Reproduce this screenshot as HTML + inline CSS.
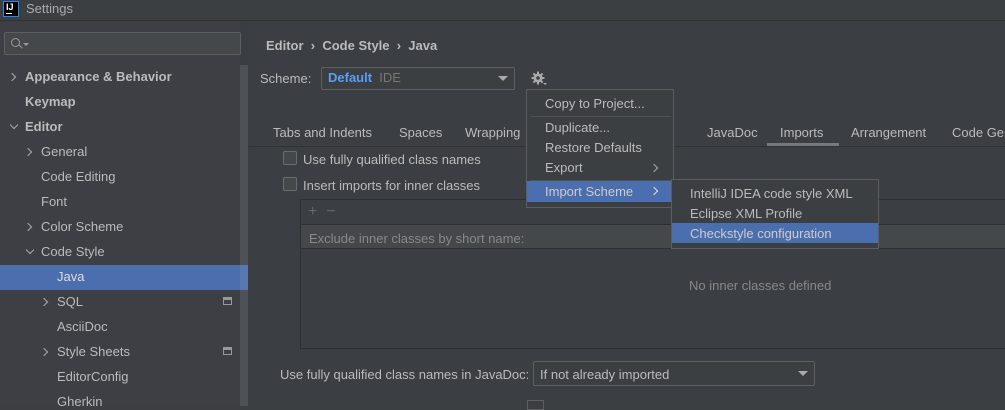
<!DOCTYPE html>
<html><head><style>
*{margin:0;padding:0;box-sizing:border-box}
body{width:1005px;height:406px;overflow:hidden;background:#3c3f41;font-family:"Liberation Sans",sans-serif;font-size:13px;color:#bbbbbb;position:relative}
.a{position:absolute;white-space:nowrap}
.t{line-height:16px;transform:translateY(1px)}
.chev{position:absolute;width:6px;height:6px;border-right:1.3px solid #aaa;border-bottom:1.3px solid #aaa}
.r{transform:rotate(-45deg)}
.d{transform:rotate(45deg)}
.cb{position:absolute;width:14px;height:14px;border:1px solid #6b6b6b;border-radius:2px;background:#43494a}
</style></head><body>
<div class="a" style="left:0;top:0;width:1005px;height:21px;background:#3c3f41;border-bottom:1px solid #2f3133"></div>
<div class="a" style="left:3px;top:1px;width:16px;height:16px;background:#000;border:1px solid #2f86ea"></div>
<div class="a" style="left:6px;top:2px;color:#fff;font-size:9px;font-weight:bold;line-height:10px">IJ</div>
<div class="a" style="left:6px;top:13px;width:6px;height:1px;background:#fff"></div>
<div class="a t" style="left:26px;top:0px;color:#aaa">Settings</div>
<div class="a" style="left:0;top:22px;width:240px;height:384px;background:#3d3f44"></div>
<div class="a" style="left:240px;top:22px;width:9px;height:384px;background:#3a3d41"></div>
<div class="a" style="left:240px;top:65px;width:8px;height:341px;background:#4e5155"></div>
<div class="a" style="left:4px;top:32px;width:237px;height:23px;background:#45484a;border:1px solid #5e6060;border-radius:2px"></div>
<div class="a" style="left:11px;top:38px;width:9px;height:9px;border:1.2px solid #999;border-radius:50%"></div>
<div class="a" style="left:18px;top:46px;width:5px;height:1.3px;background:#999;transform:rotate(45deg)"></div>
<div class="a" style="left:23px;top:43px;border-left:3px solid transparent;border-right:3px solid transparent;border-top:3px solid #999"></div>
<div class="a" style="left:0;top:265px;width:240px;height:25px;background:#4b6eaf"></div>
<div class="a" style="left:240px;top:265px;width:8px;height:25px;background:#5a78b0"></div>
<div class="chev r" style="left:9px;top:74px"></div>
<div class="a t" style="left:25px;top:68px;font-weight:bold">Appearance &amp; Behavior</div>
<div class="a t" style="left:25px;top:93px;font-weight:bold">Keymap</div>
<div class="chev d" style="left:11px;top:122px"></div>
<div class="a t" style="left:25px;top:118px;font-weight:bold">Editor</div>
<div class="chev r" style="left:25px;top:149px"></div>
<div class="a t" style="left:41px;top:143px">General</div>
<div class="a t" style="left:41px;top:168px">Code Editing</div>
<div class="a t" style="left:41px;top:193px">Font</div>
<div class="chev r" style="left:25px;top:224px"></div>
<div class="a t" style="left:41px;top:218px">Color Scheme</div>
<div class="chev d" style="left:27px;top:247px"></div>
<div class="a t" style="left:41px;top:243px">Code Style</div>
<div class="a t" style="left:57px;top:268px;color:#ddd">Java</div>
<div class="chev r" style="left:41px;top:299px"></div>
<div class="a t" style="left:57px;top:293px">SQL</div>
<div class="a" style="left:223px;top:297px;width:9px;height:8px;border:1px solid #999;border-top:3px solid #999"></div>
<div class="a t" style="left:57px;top:318px">AsciiDoc</div>
<div class="chev r" style="left:41px;top:349px"></div>
<div class="a t" style="left:57px;top:343px">Style Sheets</div>
<div class="a" style="left:223px;top:347px;width:9px;height:8px;border:1px solid #999;border-top:3px solid #999"></div>
<div class="a t" style="left:57px;top:368px">EditorConfig</div>
<div class="a t" style="left:57px;top:393px">Gherkin</div>
<div class="a" style="left:249px;top:22px;width:756px;height:384px;background:#3b3e42"></div>
<div class="a t" style="left:266px;top:37px;font-weight:bold">Editor &nbsp;›&nbsp; Code Style &nbsp;›&nbsp; Java</div>
<div class="a t" style="left:260px;top:70px">Scheme:</div>
<div class="a" style="left:321px;top:67px;width:194px;height:23px;background:#3c3f41;border:1px solid #5e6060;border-radius:2px"></div>
<div class="a t" style="left:328px;top:69px;color:#589df6;font-weight:bold">Default <span style="color:#777;font-weight:normal">&nbsp;IDE</span></div>
<div class="a" style="left:498px;top:76px;border-left:5px solid transparent;border-right:5px solid transparent;border-top:5px solid #aaa"></div>
<svg class="a" style="left:531px;top:71px" width="18" height="16" viewBox="0 0 18 16">
<g fill="#aaa"><circle cx="7" cy="7" r="4.5"/>
<rect x="6" y="0.5" width="2" height="13"/><rect x="0.5" y="6" width="13" height="2"/>
<rect x="6" y="0.5" width="2" height="13" transform="rotate(45 7 7)"/><rect x="6" y="0.5" width="2" height="13" transform="rotate(-45 7 7)"/></g>
<circle cx="7" cy="7" r="1.8" fill="#3b3e42"/>
<path d="M12 12h4l-2 2z" fill="#aaa"/></svg>
<div class="a" style="left:249px;top:146px;width:756px;height:1px;background:#323232"></div>
<div class="a t" style="left:273px;top:124px">Tabs and Indents</div>
<div class="a t" style="left:399px;top:124px">Spaces</div>
<div class="a t" style="left:465px;top:124px">Wrapping</div>
<div class="a t" style="left:660px;top:124px">es</div>
<div class="a t" style="left:707px;top:124px">JavaDoc</div>
<div class="a t" style="left:780px;top:124px">Imports</div>
<div class="a" style="left:767px;top:143px;width:72px;height:3px;background:#747a80"></div>
<div class="a t" style="left:851px;top:124px">Arrangement</div>
<div class="a t" style="left:952px;top:124px">Code Gen</div>
<div class="cb" style="left:283px;top:151px"></div>
<div class="a t" style="left:303px;top:151px">Use fully qualified class names</div>
<div class="cb" style="left:283px;top:177px"></div>
<div class="a t" style="left:303px;top:177px">Insert imports for inner classes</div>
<div class="a" style="left:300px;top:199px;width:710px;height:150px;border:1px solid #2d2f30;background:#3b3e42"></div>
<div class="a" style="left:301px;top:224px;width:704px;height:1px;background:#2d2f30"></div>
<div class="a" style="left:301px;top:225px;width:704px;height:24px;background:#45484b;border-bottom:1px solid #2d2f30"></div>
<div class="a t" style="left:308px;top:203px;color:#666;font-size:16px">+ &nbsp;−</div>
<div class="a t" style="left:309px;top:230px;color:#888">Exclude inner classes by short name:</div>
<div class="a t" style="left:689px;top:277px;color:#888">No inner classes defined</div>
<div class="a t" style="left:280px;top:366px">Use fully qualified class names in JavaDoc:</div>
<div class="a" style="left:533px;top:361px;width:282px;height:25px;background:#3c3f41;border:1px solid #5e6060;border-radius:2px"></div>
<div class="a t" style="left:540px;top:366px">If not already imported</div>
<div class="a" style="left:798px;top:371px;border-left:5px solid transparent;border-right:5px solid transparent;border-top:5px solid #aaa"></div>
<div class="a" style="left:527px;top:400px;width:17px;height:10px;border:1px solid #5e6060;background:#3c3f41"></div>
<div class="a" style="left:526px;top:89px;width:148px;height:119px;background:#3c3f41;border:1px solid #5b5d5f"></div>
<div class="a t" style="left:545px;top:95px">Copy to Project...</div>
<div class="a" style="left:530px;top:116px;width:141px;height:1px;background:#515151"></div>
<div class="a t" style="left:545px;top:119px">Duplicate...</div>
<div class="a t" style="left:545px;top:139px">Restore Defaults</div>
<div class="a t" style="left:545px;top:159px">Export</div>
<div class="chev r" style="left:651px;top:165px"></div>
<div class="a" style="left:530px;top:180px;width:141px;height:1px;background:#515151"></div>
<div class="a" style="left:527px;top:181px;width:145px;height:21px;background:#4b6eaf"></div>
<div class="a t" style="left:545px;top:183px;color:#ccc">Import Scheme</div>
<div class="chev r" style="left:651px;top:188px;border-color:#ddd"></div>
<div class="a" style="left:671px;top:179px;width:208px;height:70px;background:#3c3f41;border:1px solid #5b5d5f"></div>
<div class="a t" style="left:690px;top:185px">IntelliJ IDEA code style XML</div>
<div class="a t" style="left:690px;top:205px">Eclipse XML Profile</div>
<div class="a" style="left:672px;top:223px;width:206px;height:20px;background:#4b6eaf"></div>
<div class="a t" style="left:690px;top:225px;color:#ccc">Checkstyle configuration</div>
</body></html>
